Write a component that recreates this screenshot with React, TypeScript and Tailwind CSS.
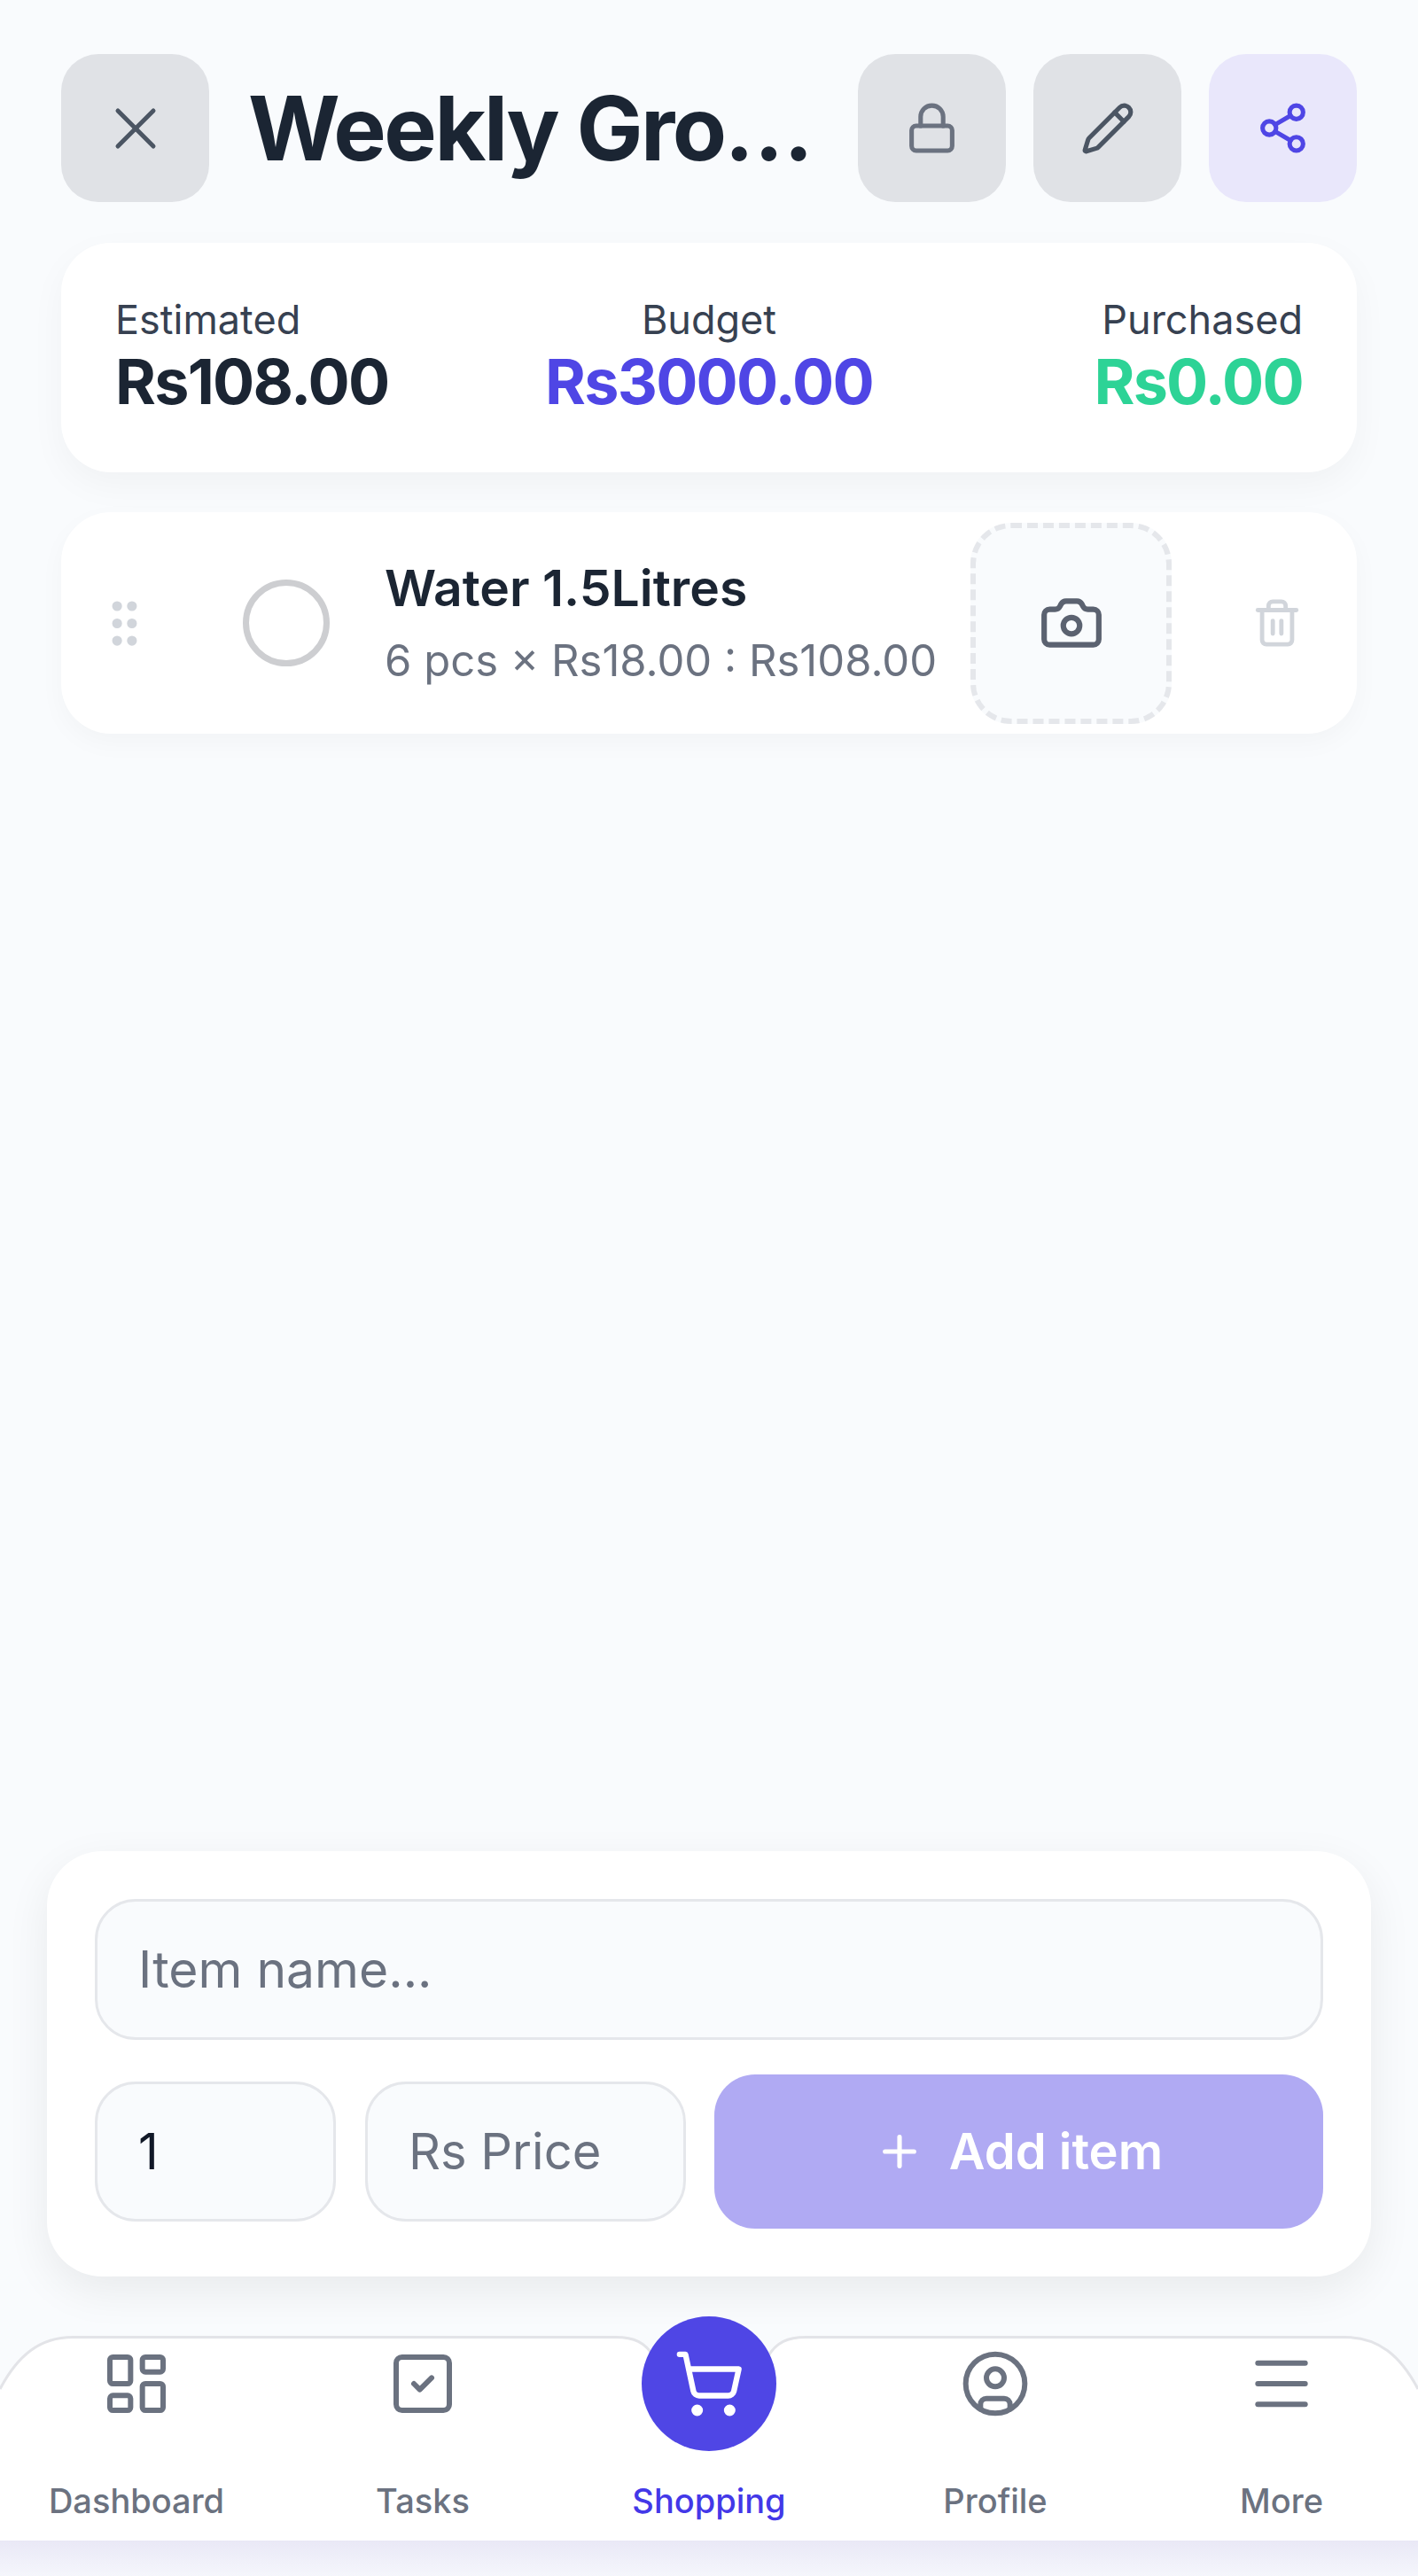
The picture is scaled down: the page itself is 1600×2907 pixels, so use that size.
import { Camera, CircleUser, GripVertical, LayoutDashboard, Lock, Menu, Pencil, Plus, Share2, ShoppingCart, SquareCheck, Trash2, X } from 'lucide-react';
import type { LucideIcon } from 'lucide-react';

const NAV: { label: string; icon: LucideIcon; active?: boolean }[] = [
  { label: 'Dashboard', icon: LayoutDashboard },
  { label: 'Tasks', icon: SquareCheck },
  { label: 'Shopping', icon: ShoppingCart, active: true },
  { label: 'Profile', icon: CircleUser },
  { label: 'More', icon: Menu },
];

function NavShape() {
  const topLeft = 'M0 60C20 22 45 1.5 82 1.5H695C715 1.5 728 7 738 24';
  const topRight = 'C876 7 889 1.5 909 1.5H1518C1555 1.5 1580 22 1600 60';
  return (
    <svg className="absolute inset-0" width="1600" height="231" viewBox="0 0 1600 231" fill="none">
      <path d={`${topLeft}L800 60L866 24${topRight}V231H0Z`} fill="#fff" />
      <path d={topLeft} stroke="#e3e4e8" strokeWidth="3" />
      <path d={`M866 24${topRight}`} stroke="#e3e4e8" strokeWidth="3" />
    </svg>
  );
}

export default function App() {
  return (
    <div className="flex h-[2907px] w-[1600px] flex-col overflow-hidden bg-[#f9fbfd] font-['Inter',sans-serif]">
      <header className="mx-[69px] mt-[61px] flex h-[167px] items-center">
        <button className="flex h-[167px] w-[167px] shrink-0 items-center justify-center rounded-[42px] bg-[#e0e2e6] text-[#4b5563]">
          <X size={80} strokeWidth={1.5} />
        </button>
        <h1 className="ml-[44px] mr-[34px] min-w-0 flex-1 truncate text-[100px] leading-[130px] font-bold tracking-[-0.025em] text-[#1b2533]">
          Weekly Groceries
        </h1>
        <div className="flex shrink-0 gap-[31px]">
          <button className="flex h-[167px] w-[167px] items-center justify-center rounded-[42px] bg-[#e0e2e6] text-[#6b7280]">
            <Lock size={61} />
          </button>
          <button className="flex h-[167px] w-[167px] items-center justify-center rounded-[42px] bg-[#e0e2e6] text-[#4b5563]">
            <Pencil size={62} />
          </button>
          <button className="flex h-[167px] w-[167px] items-center justify-center rounded-[42px] bg-[#e9e7fb] text-[#4f46e5]">
            <Share2 size={61} />
          </button>
        </div>
      </header>

      <section className="mx-[69px] mt-[46px] grid h-[259px] grid-cols-3 items-center rounded-[56px] bg-white px-[61px] pb-[6px] shadow-[0_14px_40px_rgba(0,0,0,0.04)]">
        <div>
          <p className="mb-[2px] text-[45px] leading-[58px] text-[#374151]">Estimated</p>
          <p className="text-[70px] leading-[78px] font-bold tracking-[-0.025em] text-[#1b2533]">Rs108.00</p>
        </div>
        <div className="text-center">
          <p className="mb-[2px] text-[45px] leading-[58px] text-[#374151]">Budget</p>
          <p className="text-[70px] leading-[78px] font-bold tracking-[-0.025em] text-[#4f46e5]">Rs3000.00</p>
        </div>
        <div className="text-right">
          <p className="mb-[2px] text-[45px] leading-[58px] text-[#374151]">Purchased</p>
          <p className="text-[70px] leading-[78px] font-bold tracking-[-0.025em] text-[#2dd396]">Rs0.00</p>
        </div>
      </section>

      <section className="mx-[69px] mt-[45px] flex h-[250px] items-center rounded-[56px] bg-white shadow-[0_10px_30px_rgba(0,0,0,0.03)]">
        <GripVertical size={67} className="ml-[38px] shrink-0 fill-[#d1d5db] text-[#d1d5db]" />
        <span className="ml-[100px] h-[98px] w-[98px] shrink-0 rounded-full border-[7px] border-[#cdced1]" />
        <div className="ml-[62px] w-[661px] shrink-0">
          <p className="text-[57px] leading-[74px] font-semibold text-[#1b2533]">Water 1.5Litres</p>
          <p className="mt-[12px] text-[49px] leading-[66px] whitespace-nowrap text-[#6b7280]">6 pcs × Rs18.00 : Rs108.00</p>
        </div>
        <button className="flex h-[227px] w-[227px] shrink-0 items-center justify-center rounded-[46px] border-[6px] border-dashed border-[#e5e7eb] bg-[#f9fbfd] text-[#5b6270]">
          <Camera size={74} />
        </button>
        <Trash2 size={58} className="ml-[90px] shrink-0 text-[#d1d5db]" />
      </section>

      <div className="flex-1" />

      <form className="mx-[53px] rounded-[62px] bg-white p-[54px] shadow-[0_16px_50px_rgba(0,0,0,0.07)]">
        <input
          placeholder="Item name..."
          className="h-[159px] w-full rounded-[46px] border-[3.5px] border-[#e5e7eb] bg-[#f9fbfd] pl-[46px] text-[57px] text-[#111827] outline-none placeholder:text-[#6b7280]"
        />
        <div className="mt-[39px] flex items-center">
          <input
            readOnly
            value="1"
            className="h-[158px] w-[272px] rounded-[46px] border-[3.5px] border-[#e5e7eb] bg-[#f9fbfd] pl-[46px] text-[56px] text-[#111827] outline-none"
          />
          <input
            placeholder="Rs Price"
            className="ml-[33px] h-[158px] w-[362px] rounded-[46px] border-[3.5px] border-[#e5e7eb] bg-[#f9fbfd] pl-[46px] text-[56px] text-[#111827] outline-none placeholder:text-[#6b7280]"
          />
          <button
            type="button"
            className="ml-[32px] flex h-[174px] flex-1 items-center justify-center gap-[28px] rounded-[46px] bg-[#b0aaf3] text-[56px] font-semibold text-white"
          >
            <Plus size={56} strokeWidth={2.2} />
            Add item
          </button>
        </div>
      </form>

      <nav className="relative mt-[67px] flex h-[231px] shrink-0 justify-center">
        <NavShape />
        {NAV.map(({ label, icon: Icon, active }) => (
          <div key={label} className="relative flex w-[323px] shrink-0 flex-col items-center">
            {active ? (
              <span className="mt-[-22px] mb-[33px] flex h-[152px] w-[152px] items-center justify-center rounded-full bg-[#4f46e5] text-white">
                <Icon size={80} strokeWidth={1.9} />
              </span>
            ) : (
              <span className="mt-[14px] mb-[69px] text-[#6b7280]">
                <Icon size={80} strokeWidth={1.8} className="block" />
              </span>
            )}
            <span className={`text-[38px] leading-[46px] font-medium ${active ? 'text-[#4338e8]' : 'text-[#6b7280]'}`}>
              {label}
            </span>
          </div>
        ))}
      </nav>
      <div className="h-[40px] shrink-0 bg-gradient-to-b from-[#e9e8f6] to-[#f5f6fc]" />
    </div>
  );
}
